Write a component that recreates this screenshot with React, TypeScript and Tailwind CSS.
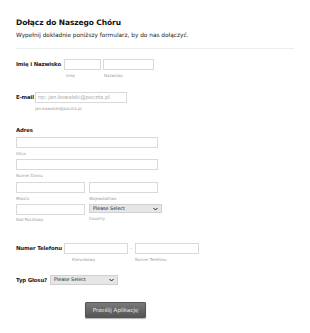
import React from 'react'

const box = 'h-[11px] border border-[#d9d9d9] bg-white'
const sub = 'text-[4px] leading-[5px] text-[#999] mt-[2px] whitespace-nowrap'
const label = 'text-[5.4px] font-bold text-[#222] leading-[8px] whitespace-nowrap shrink-0 tracking-[-0.15px]'

function Select({ w, h }: { w: string; h: string }) {
  return (
    <div className={`${w} ${h} bg-[#e6e6e6] border border-[#d0d0d0] flex items-center justify-between px-[3px]`}>
      <span className="text-[4.8px] text-[#222]">Please Select</span>
      <svg width="5" height="4" viewBox="0 0 10 8">
        <path d="M1 2 L5 6 L9 2" stroke="#222" strokeWidth="2" fill="none" />
      </svg>
    </div>
  )
}

export default function App() {
  return (
    <div className="w-[310px] h-[333px] bg-white overflow-hidden" style={{ fontFamily: '"DejaVu Sans", Verdana, sans-serif' }}>
      <div className="pl-[16px] pr-[16px] pt-[18px]">
        <div className="text-[7.5px] font-bold text-[#111] leading-[10px] tracking-[-0.1px]">Dołącz do Naszego Chóru</div>
        <div className="text-[5.8px] text-[#222] leading-[7px] mt-[4px] whitespace-nowrap">Wypełnij dokładnie poniższy formularz, by do nas dołączyć.</div>
        <div className="h-[1px] bg-[#eeeeee] mt-[9px]" />

        {/* Imię i Nazwisko */}
        <div className="flex mt-[10px]">
          <div className={`${label} w-[48px] mt-[1px]`}>Imię i Nazwisko</div>
          <div className="flex flex-col w-[39px]">
            <div className={`${box} w-[37px]`} />
            <div className={`${sub} pl-[2px] mt-[3px]`}>Imię</div>
          </div>
          <div className="flex flex-col">
            <div className={`${box} w-[51px]`} />
            <div className={`${sub} pl-[1px] mt-[3px]`}>Nazwisko</div>
          </div>
        </div>

        {/* E-mail */}
        <div className="flex mt-[14px]">
          <div className={`${label} w-[19px] mt-[1px]`}>E-mail</div>
          <div className="flex flex-col">
            <div className={`${box} w-[92px] flex items-center px-[2px]`}>
              <span className="text-[5.3px] text-[#aaa] whitespace-nowrap">np: jan.kowalski@poczta.pl</span>
            </div>
            <div className={`${sub} mt-[3px]`}>jan.kowalski@poczta.pl</div>
          </div>
        </div>

        {/* Adres */}
        <div className={`${label} mt-[15px]`}>Adres</div>
        <div className="flex flex-col w-[146px] mt-[3px]">
          <div className={`${box} w-[142px]`} />
          <div className={`${sub} mt-[3px]`}>Ulica</div>
          <div className={`${box} w-[142px] mt-[3px]`} />
          <div className={`${sub} mt-[3px]`}>Numer Domu</div>
          <div className="flex gap-[4px] mt-[4px]">
            <div className="flex flex-col">
              <div className={`${box} w-[69px]`} />
              <div className={`${sub} mt-[3px]`}>Miasto</div>
            </div>
            <div className="flex flex-col">
              <div className={`${box} w-[69px]`} />
              <div className={`${sub} mt-[3px]`}>Województwo</div>
            </div>
          </div>
          <div className="flex gap-[4px] mt-[3px]">
            <div className="flex flex-col">
              <div className={`${box} w-[69px]`} />
              <div className={`${sub} mt-[2px]`}>Kod Pocztowy</div>
            </div>
            <div className="flex flex-col">
              <Select w="w-[73px]" h="h-[9px]" />
              <div className={`${sub} mt-[3px]`}>Country</div>
            </div>
          </div>
        </div>

        {/* Numer Telefonu */}
        <div className="flex mt-[21px]">
          <div className={`${label} w-[48px] mt-[1px]`}>Numer Telefonu</div>
          <div className="flex flex-col">
            <div className={`${box} w-[64px]`} />
            <div className={`${sub} pl-[8px] mt-[3px]`}>Kierunkowy</div>
          </div>
          <div className="w-[7px] text-[5px] text-[#999] text-center leading-[11px]">-</div>
          <div className="flex flex-col">
            <div className={`${box} w-[64px]`} />
            <div className={`${sub} mt-[3px]`}>Numer Telefonu</div>
          </div>
        </div>

        {/* Typ Głosu */}
        <div className="flex items-start mt-[13px]">
          <div className={`${label} w-[34px] mt-[1px]`}>Typ Głosu?</div>
          <Select w="w-[68px]" h="h-[10px]" />
        </div>

        <div className="flex mt-[17px] pl-[69px]">
          <button className="w-[61px] h-[16px] rounded-[1px] border border-[#555] bg-gradient-to-b from-[#7a7a7a] to-[#555] text-[5.5px] text-[#e6e6e6] shadow-[0_1px_1px_rgba(0,0,0,0.3)] whitespace-nowrap">
            Prześlij Aplikację
          </button>
        </div>
      </div>
    </div>
  )
}
